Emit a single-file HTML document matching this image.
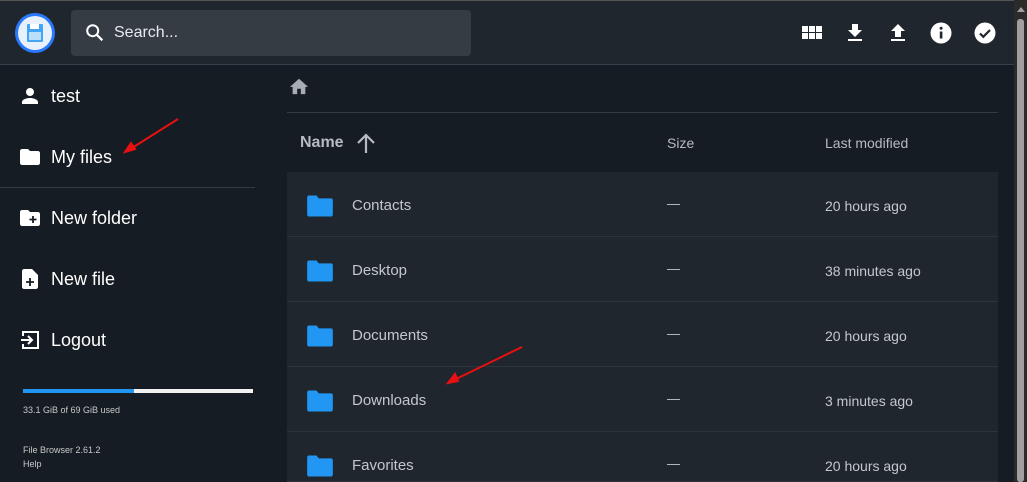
<!DOCTYPE html>
<html><head><style>
*{margin:0;padding:0;box-sizing:border-box}
html{width:1027px;height:482px;overflow:hidden}
body{width:1027px;height:482px;overflow:hidden;background:#161c23;font-family:"Liberation Sans",sans-serif;position:relative;color:#fff}
.hdr{position:absolute;left:0;top:0;width:1014px;height:65px;background:#20262e;border-top:1px solid #555;border-bottom:1px solid #3a4049}
.logo{position:absolute;left:15px;top:12px;width:40px;height:40px;border-radius:50%;background:#2979ff;}
.logo .in{position:absolute;left:3px;top:3px;width:34px;height:34px;border-radius:50%;background:#e8f1fb}
.search{position:absolute;left:71px;top:9px;width:400px;height:46px;background:#363c44;border-radius:4px}
.search span{position:absolute;left:43px;top:14px;font-size:16px;color:#e8eaed}
.item{position:absolute;left:18px;font-size:18px;color:#fff;display:flex;align-items:center}
.item svg{margin-right:9px}
.sb{position:absolute;left:1014px;top:0;width:13px;height:482px;background:#2b2b2b}
.thumb{position:absolute;left:1017px;top:19px;width:7px;height:463px;background:#a0a0a0;border-radius:3px}
.row{position:absolute;left:287px;width:711px;height:65px;background:#20262e;border-bottom:1px solid #2d333b;font-size:15px;color:#c3c8cf}
.row .n{position:absolute;left:65px;top:25px}
.row .s{position:absolute;left:380px;top:24px;font-size:13px}
.row .m{position:absolute;left:538px;top:26px;font-size:14px}
.row svg{position:absolute;left:19px;top:22px}
.small{position:absolute;left:23px;font-size:9px;color:#c8c8c8}
</style></head><body>
<div class="hdr">
 <div class="logo"><div class="in"><svg width="34" height="34" viewBox="0 0 34 34"><rect x="9" y="8" width="16" height="18" rx="1" fill="#42a5f5"/><rect x="12" y="8" width="9" height="5" fill="#fff"/><rect x="11" y="16" width="12" height="8" fill="#bbdefb"/></svg></div></div>
 <div class="search"><svg style="position:absolute;left:13px;top:12px" width="22" height="22" viewBox="0 0 24 24"><circle cx="9.5" cy="9.5" r="6" stroke="#fff" stroke-width="2.2" fill="none"/><path d="M14 14l6 6" stroke="#fff" stroke-width="2.4"/></svg><span>Search...</span></div>
 <svg style="position:absolute;left:802px;top:22px" width="20" height="20" viewBox="0 0 20 20"><g fill="#fff"><rect x="0" y="3" width="6" height="6"/><rect x="7" y="3" width="6" height="6"/><rect x="14" y="3" width="6" height="6"/><rect x="0" y="10" width="6" height="6"/><rect x="7" y="10" width="6" height="6"/><rect x="14" y="10" width="6" height="6"/></g></svg>
 <svg style="position:absolute;left:843px;top:20px" width="24" height="24" viewBox="0 0 24 24"><path fill="#fff" d="M19 9h-4V3H9v6H5l7 7zM5 18v2h14v-2z"/></svg>
 <svg style="position:absolute;left:886px;top:20px" width="24" height="24" viewBox="0 0 24 24"><path fill="#fff" d="M9 16h6v-6h4l-7-7-7 7h4zM5 18h14v2H5z"/></svg>
 <svg style="position:absolute;left:929px;top:20px" width="24" height="24" viewBox="0 0 24 24"><circle cx="12" cy="12" r="10.5" fill="#fff"/><rect x="10.8" y="10.5" width="2.6" height="7" fill="#20262e"/><circle cx="12.1" cy="7.3" r="1.5" fill="#20262e"/></svg>
 <svg style="position:absolute;left:973px;top:20px" width="24" height="24" viewBox="0 0 24 24"><circle cx="12" cy="12" r="10.5" fill="#fff"/><path d="M7 12.5l3.3 3.3L17 9" stroke="#20262e" stroke-width="2.2" fill="none"/></svg>
</div>
<div class="item" style="top:84px"><svg width="24" height="24" viewBox="0 0 24 24"><path fill="#fff" d="M12 12a4 4 0 1 0 0-8 4 4 0 0 0 0 8zm0 2c-2.7 0-8 1.3-8 4v2h16v-2c0-2.7-5.3-4-8-4z"/></svg>test</div>
<div class="item" style="top:145px"><svg width="24" height="24" viewBox="0 0 24 24"><path fill="#fff" d="M10 4H4c-1.1 0-2 .9-2 2v12c0 1.1.9 2 2 2h16c1.1 0 2-.9 2-2V8c0-1.1-.9-2-2-2h-8z"/></svg>My files</div>
<div style="position:absolute;left:0;top:187px;width:255px;height:1px;background:#353b43"></div>
<div class="item" style="top:206px"><svg width="24" height="24" viewBox="0 0 24 24"><path fill="#fff" d="M10 4H4c-1.1 0-2 .9-2 2v12c0 1.1.9 2 2 2h16c1.1 0 2-.9 2-2V8c0-1.1-.9-2-2-2h-8z"/><path d="M15 10v7M11.5 13.5h7" stroke="#161c23" stroke-width="1.8"/></svg>New folder</div>
<div class="item" style="top:267px"><svg width="24" height="24" viewBox="0 0 24 24"><path fill="#fff" d="M14 2H6c-1.1 0-2 .9-2 2v16c0 1.1.9 2 2 2h12c1.1 0 2-.9 2-2V8z"/><path d="M12 11v8M8 15h8" stroke="#161c23" stroke-width="1.8"/></svg>New file</div>
<div class="item" style="top:328px"><svg width="24" height="24" viewBox="0 0 24 24"><path d="M10 8l4 4-4 4M3 12h11" stroke="#fff" stroke-width="2" fill="none"/><path d="M5 8V4h15v16H5v-4" stroke="#fff" stroke-width="2" fill="none"/></svg>Logout</div>
<div style="position:absolute;left:23px;top:389px;width:111px;height:4px;background:#2196f3"></div>
<div style="position:absolute;left:134px;top:389px;width:119px;height:4px;background:#f1f1f1"></div>
<div class="small" style="top:405px">33.1 GiB of 69 GiB used</div>
<div class="small" style="top:445px">File Browser 2.61.2</div>
<div class="small" style="top:459px">Help</div>
<svg style="position:absolute;left:288px;top:76px" width="22" height="20" viewBox="0 0 24 22"><path fill="#a8adb3" d="M10 20v-6h4v6h5v-8h3L12 3 2 12h3v8z"/></svg>
<div style="position:absolute;left:287px;top:112px;width:711px;height:1px;background:#353b43"></div>
<div style="position:absolute;left:300px;top:134px;font-size:16px;font-weight:bold;color:#b6bbc1">Name</div>
<svg style="position:absolute;left:354px;top:131px" width="24" height="24" viewBox="0 0 24 24"><path d="M12 22V4M4 12l8-8 8 8" stroke="#b6bbc1" stroke-width="2.2" fill="none"/></svg>
<div style="position:absolute;left:667px;top:135px;font-size:14px;color:#b6bbc1">Size</div>
<div style="position:absolute;left:825px;top:135px;font-size:14px;color:#b6bbc1">Last modified</div>
<div class="row" style="top:172px"><svg width="28" height="24" viewBox="0 0 24 20"><path fill="#2196f3" d="M9 1H2.5C1.7 1 1 1.7 1 2.5v15c0 .8.7 1.5 1.5 1.5h19c.8 0 1.5-.7 1.5-1.5V5c0-.8-.7-1.5-1.5-1.5H11z"/></svg><span class="n">Contacts</span><span class="s">—</span><span class="m">20 hours ago</span></div>
<div class="row" style="top:237px"><svg width="28" height="24" viewBox="0 0 24 20"><path fill="#2196f3" d="M9 1H2.5C1.7 1 1 1.7 1 2.5v15c0 .8.7 1.5 1.5 1.5h19c.8 0 1.5-.7 1.5-1.5V5c0-.8-.7-1.5-1.5-1.5H11z"/></svg><span class="n">Desktop</span><span class="s">—</span><span class="m">38 minutes ago</span></div>
<div class="row" style="top:302px"><svg width="28" height="24" viewBox="0 0 24 20"><path fill="#2196f3" d="M9 1H2.5C1.7 1 1 1.7 1 2.5v15c0 .8.7 1.5 1.5 1.5h19c.8 0 1.5-.7 1.5-1.5V5c0-.8-.7-1.5-1.5-1.5H11z"/></svg><span class="n">Documents</span><span class="s">—</span><span class="m">20 hours ago</span></div>
<div class="row" style="top:367px"><svg width="28" height="24" viewBox="0 0 24 20"><path fill="#2196f3" d="M9 1H2.5C1.7 1 1 1.7 1 2.5v15c0 .8.7 1.5 1.5 1.5h19c.8 0 1.5-.7 1.5-1.5V5c0-.8-.7-1.5-1.5-1.5H11z"/></svg><span class="n">Downloads</span><span class="s">—</span><span class="m">3 minutes ago</span></div>
<div class="row" style="top:432px;height:50px"><svg width="28" height="24" viewBox="0 0 24 20"><path fill="#2196f3" d="M9 1H2.5C1.7 1 1 1.7 1 2.5v15c0 .8.7 1.5 1.5 1.5h19c.8 0 1.5-.7 1.5-1.5V5c0-.8-.7-1.5-1.5-1.5H11z"/></svg><span class="n">Favorites</span><span class="s">—</span><span class="m">20 hours ago</span></div>
<svg style="position:absolute;left:0;top:0" width="1027" height="482"><g stroke="#e81010" stroke-width="2" fill="#e81010"><line x1="178" y1="119" x2="132" y2="148"/><path d="M125 152l6-9 4 6z"/><line x1="522" y1="347" x2="456" y2="379"/><path d="M448 383l7-9 3 7z"/></g></svg>
<div class="sb"></div><div class="thumb"></div>
<svg style="position:absolute;left:1016px;top:5px" width="10" height="8"><path d="M1 7L5 2 9 7z" fill="#a0a0a0"/></svg>
</body></html>
